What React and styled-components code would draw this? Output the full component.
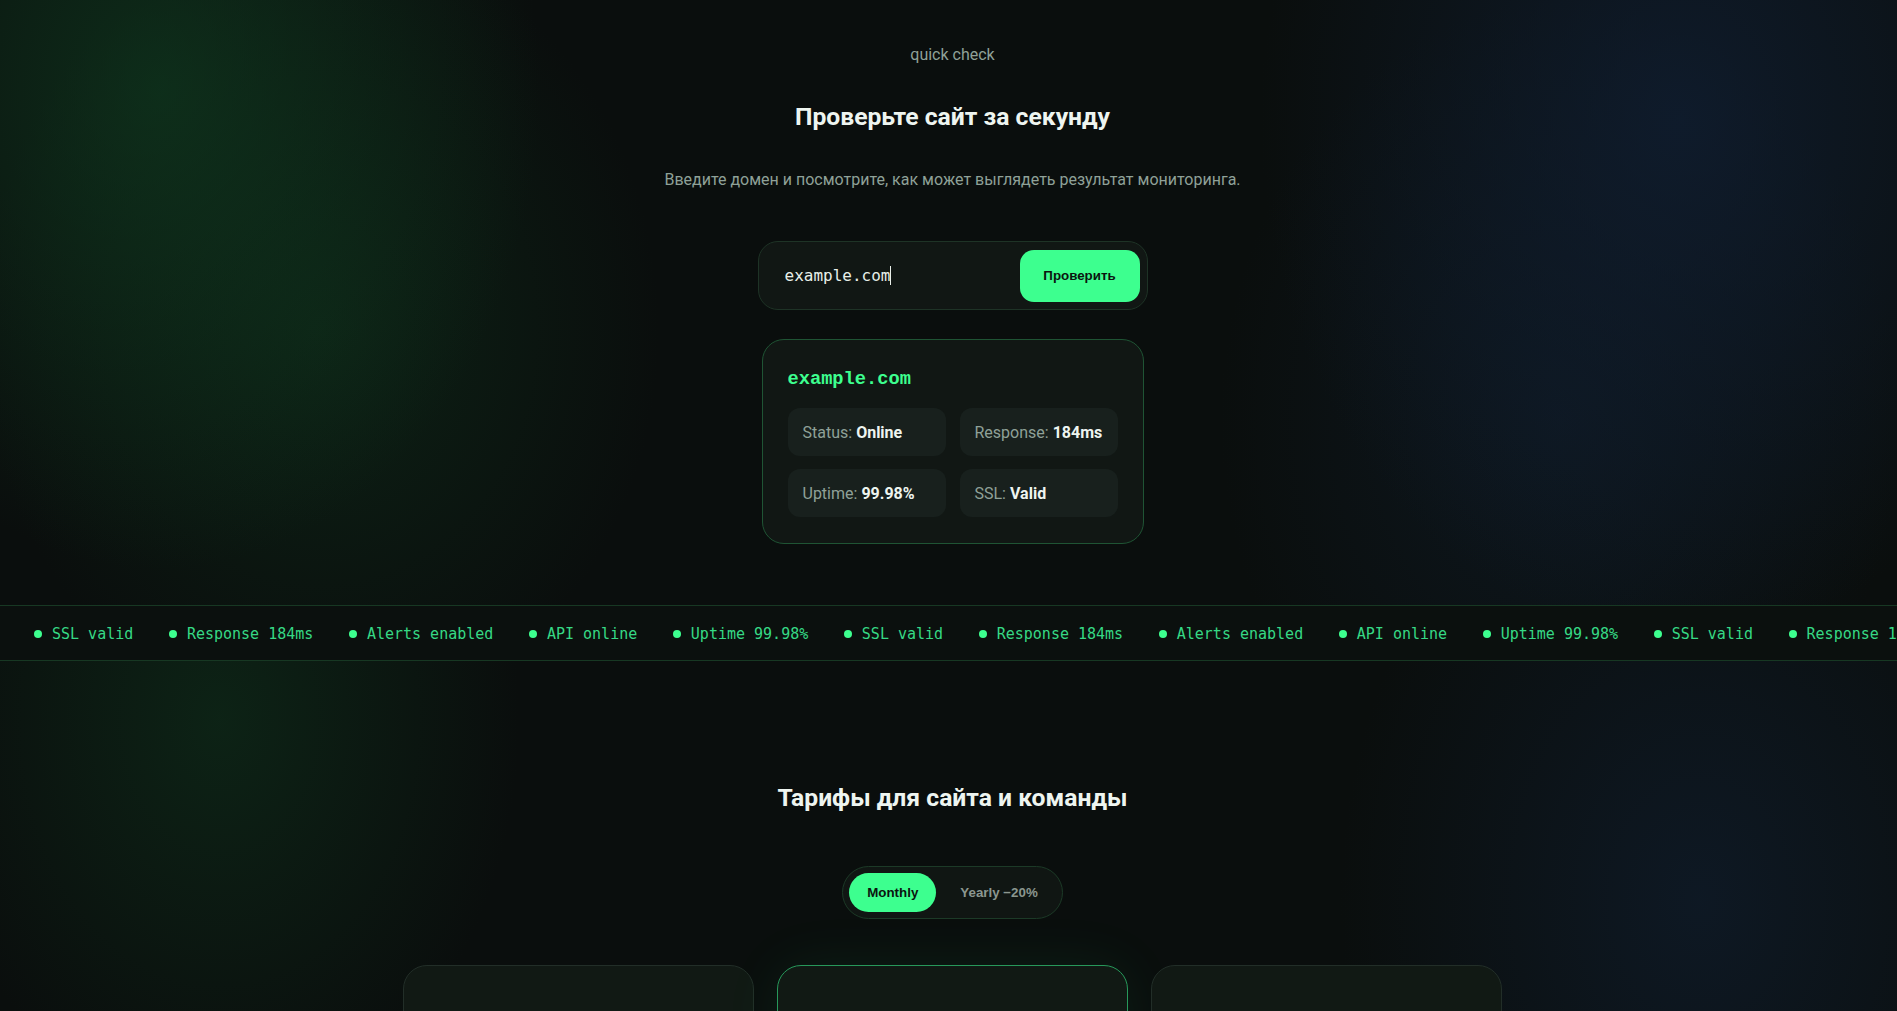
import styled, { createGlobalStyle } from 'styled-components'

const GlobalStyle = createGlobalStyle`
    * { box-sizing: border-box; }
    body {
        margin: 0;
        background: #0a0e0d;
    }
`

// Palette
const c = {
    bg: '#0a0e0d',
    panel: '#111714',
    tile: '#18201d',
    text: '#eef5f0',
    muted: '#8fa198',
    accent: '#3dff8f',
    accentText: '#36d985',
    line: '#1e3326',
}

const Page = styled.div`
    min-height: 100vh;
    background: ${c.bg};
    color: ${c.text};
    font-family: Roboto, "Noto Sans", sans-serif;
    overflow: hidden;
`

const Hero = styled.section`
    display: flex;
    flex-direction: column;
    align-items: center;
    padding: 43px 0 61px 8px;
    background:
        radial-gradient(ellipse 380px 480px at 160px 90px, rgba(16, 64, 34, 0.6), transparent),
        radial-gradient(ellipse 340px 400px at 320px 330px, rgba(16, 60, 32, 0.42), transparent),
        radial-gradient(ellipse 420px 520px at 1680px 120px, rgba(16, 30, 50, 0.8), transparent),
        radial-gradient(ellipse 340px 420px at 1560px 420px, rgba(16, 30, 46, 0.55), transparent);
`

const Eyebrow = styled.div`
    font-size: 16px;
    line-height: 24px;
    color: ${c.muted};
`

const Title = styled.h2`
    margin: ${p => p.$top || 0}px 0 0;
    font-size: 24.7px;
    line-height: 34px;
    font-weight: 700;
    color: ${c.text};
`

const Lead = styled.p`
    margin: 34px 0 0;
    font-size: 16px;
    line-height: 24px;
    color: ${c.muted};
`

const CheckForm = styled.form`
    margin-top: 49px;
    width: 390px;
    height: 69px;
    display: flex;
    align-items: center;
    padding: 0 7px 0 26px;
    border: 1px solid ${c.line};
    border-radius: 20px;
    background: ${c.panel};
`

const DomainInput = styled.input`
    width: 11ch;
    border: 0;
    outline: 0;
    padding: 0;
    background: none;
    color: #e8efe9;
    caret-color: #e8efe9;
    font: 16px "DejaVu Sans Mono", monospace;
`

// text cursor shown after the typed domain
const Caret = styled.span`
    width: 1px;
    height: 19px;
    margin-right: auto;
    background: #e8efe9;
`

const CheckButton = styled.button`
    width: 120px;
    height: 52px;
    border: 0;
    border-radius: 14px;
    background: ${c.accent};
    color: #0b1510;
    font: 700 13.33px "Liberation Sans", Arial, sans-serif;
    cursor: pointer;
`

const ResultCard = styled.div`
    margin-top: 29px;
    width: 382px;
    padding: 24px 25px 26px;
    border: 1px solid #1f5434;
    border-radius: 22px;
    background: ${c.panel};
`

const Domain = styled.div`
    font: 700 18.7px/30px "Liberation Mono", monospace;
    color: ${c.accent};
`

const StatGrid = styled.div`
    margin-top: 14px;
    display: grid;
    grid-template-columns: 1fr 1fr;
    gap: 13px 14px;
`

const Stat = styled.div`
    height: 48px;
    display: flex;
    align-items: center;
    padding: 0 15px;
    border-radius: 12px;
    background: ${c.tile};
    font-size: 16px;
    color: ${c.muted};
    b {
        margin-left: 4px;
        color: ${c.text};
        font-weight: 700;
    }
`

// Running status strip
const Ticker = styled.div`
    height: 56px;
    display: flex;
    align-items: center;
    overflow: hidden;
    border-top: 1px solid #173823;
    border-bottom: 1px solid #173823;
    background: #0b100e;
`

const Track = styled.div`
    display: flex;
    gap: 35.6px;
    padding: 2px 0 0 34px;
    white-space: nowrap;
`

const TickItem = styled.span`
    display: flex;
    align-items: center;
    gap: 10px;
    font: 15px "DejaVu Sans Mono", monospace;
    color: ${c.accentText};
    &::before {
        content: '';
        width: 8px;
        height: 8px;
        border-radius: 50%;
        background: ${c.accent};
    }
`

const Pricing = styled.section`
    display: flex;
    flex-direction: column;
    align-items: center;
    padding: 120px 0 0 8px;
    min-height: 400px;
    background:
        radial-gradient(ellipse 300px 400px at 220px 60px, rgba(16, 60, 32, 0.45), transparent),
        radial-gradient(ellipse 360px 480px at 1700px 240px, rgba(16, 30, 48, 0.65), transparent);
`

const Toggle = styled.div`
    margin-top: 51px;
    display: flex;
    gap: 6px;
    padding: 6px;
    border: 1px solid #1c3a27;
    border-radius: 999px;
    background: #101613;
`

const ToggleButton = styled.button`
    height: 39px;
    padding: 0 18px;
    border: 0;
    border-radius: 999px;
    background: ${p => (p.$active ? c.accent : 'transparent')};
    color: ${p => (p.$active ? '#0b1510' : '#8b978f')};
    font: 700 13.33px "Liberation Sans", Arial, sans-serif;
    cursor: pointer;
`

const Plans = styled.div`
    margin-top: 46px;
    display: grid;
    grid-template-columns: repeat(3, 351px);
    gap: 23px;
`

const Plan = styled.div`
    height: 420px;
    border: 1px solid ${p => (p.$featured ? '#27985a' : '#222e28')};
    border-radius: 24px;
    background: #111914;
    box-shadow: ${p => (p.$featured ? '0 0 60px rgba(61, 255, 143, 0.07)' : 'none')};
`

const ticks = ['SSL valid', 'Response 184ms', 'Alerts enabled', 'API online', 'Uptime 99.98%']

const App = () => {
    return (
        <Page>
            <GlobalStyle />
            <Hero>
                <Eyebrow>quick check</Eyebrow>
                <Title $top={33}>Проверьте сайт за секунду</Title>
                <Lead>Введите домен и посмотрите, как может выглядеть результат мониторинга.</Lead>
                <CheckForm onSubmit={e => e.preventDefault()}>
                    <DomainInput defaultValue="example.com" />
                    <Caret />
                    <CheckButton type="submit">Проверить</CheckButton>
                </CheckForm>
                <ResultCard>
                    <Domain>example.com</Domain>
                    <StatGrid>
                        <Stat>Status:<b>Online</b></Stat>
                        <Stat>Response:<b>184ms</b></Stat>
                        <Stat>Uptime:<b>99.98%</b></Stat>
                        <Stat>SSL:<b>Valid</b></Stat>
                    </StatGrid>
                </ResultCard>
            </Hero>

            <Ticker>
                <Track>
                    {[...ticks, ...ticks, ...ticks].map((t, i) => (
                        <TickItem key={i}>{t}</TickItem>
                    ))}
                </Track>
            </Ticker>

            <Pricing>
                <Title>Тарифы для сайта и команды</Title>
                <Toggle>
                    <ToggleButton $active>Monthly</ToggleButton>
                    <ToggleButton>Yearly −20%</ToggleButton>
                </Toggle>
                <Plans>
                    <Plan />
                    <Plan $featured />
                    <Plan />
                </Plans>
            </Pricing>
        </Page>
    )
}

export default App
